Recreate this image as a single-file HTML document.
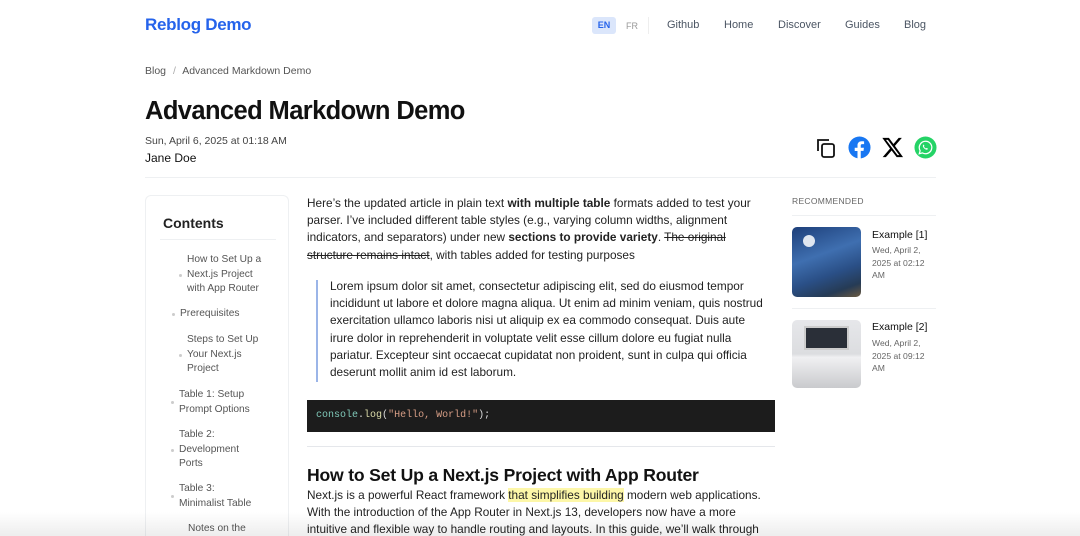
<!DOCTYPE html>
<html style="width:1080px;height:536px;overflow:hidden"><head><meta charset="utf-8"><style>
*{margin:0;padding:0;box-sizing:border-box}
body{width:1080px;height:536px;overflow:hidden;background:#fff;font-family:"Liberation Sans",sans-serif;color:#1f2328;position:relative}
.a{position:absolute}
.nav a{position:absolute;top:19px;font-size:11px;color:#4b5563}
.p{font-size:11.8px;line-height:17.2px;color:#222}
.toc div{position:absolute;font-size:10.2px;line-height:14.6px;color:#555}
.toc span{position:absolute;left:-8px;width:3px;height:3px;border-radius:50%;background:#ccc}
</style></head><body>
<div class="a" style="left:145px;top:15px;font-size:17px;font-weight:bold;color:#2563eb;letter-spacing:-0.3px">Reblog Demo</div>
<div class="nav">
<div class="a" style="left:592px;top:17px;width:24px;height:17px;background:#dbe6fb;border-radius:3px;font-size:9px;font-weight:bold;color:#2563eb;text-align:center;line-height:17px">EN</div>
<div class="a" style="left:626px;top:21px;font-size:9px;color:#999">FR</div>
<div class="a" style="left:648px;top:17px;width:1px;height:17px;background:#eee"></div>
<a style="left:667px">Github</a><a style="left:724px">Home</a><a style="left:778px">Discover</a><a style="left:845px">Guides</a><a style="left:904px">Blog</a>
</div>
<div class="a" style="left:145px;top:65px;font-size:10.5px;color:#555">Blog <span style="color:#aaa;margin:0 4px">/</span> Advanced Markdown Demo</div>
<div class="a" style="left:145px;top:97px;font-size:25.5px;font-weight:bold;letter-spacing:-0.6px;color:#111">Advanced Markdown Demo</div>
<div class="a" style="left:145px;top:135px;font-size:10.5px;color:#444">Sun, April 6, 2025 at 01:18 AM</div>
<div class="a" style="left:145px;top:151px;font-size:12px;color:#111">Jane Doe</div>
<svg class="a" style="left:815px;top:137px" width="24" height="22" viewBox="0 0 24 22" fill="none" stroke="#111" stroke-width="1.8"><path d="M3 14V3h11"/><rect x="7" y="7" width="12" height="13" rx="2"/></svg>
<svg class="a" style="left:848px;top:136px" width="23" height="23" viewBox="0 0 24 24"><circle cx="12" cy="12" r="11.5" fill="#1877f2"/><path d="M13.3 24v-8.5h2.9l.4-3.3h-3.3v-2.1c0-1 .3-1.6 1.7-1.6h1.8V5.6c-.3 0-1.4-.1-2.6-.1-2.6 0-4.3 1.6-4.3 4.4v2.4H7v3.3h2.9V24z" fill="#fff"/></svg>
<svg class="a" style="left:882px;top:137px" width="22" height="21" viewBox="0 0 24 23"><path d="M18.2 1h3.5l-7.6 8.7L23 22h-7l-5.5-7.2L4.2 22H.7l8.1-9.3L.3 1h7.2l5 6.6zM17 19.9h1.9L6.4 3.1H4.3z" fill="#000"/></svg>
<svg class="a" style="left:914px;top:136px" width="23" height="23" viewBox="0 0 24 24"><circle cx="12" cy="12" r="11.5" fill="#25d366"/><path d="M12 5.5a6.5 6.5 0 0 0-5.6 9.8l-.9 3.2 3.3-.9A6.5 6.5 0 1 0 12 5.5z" fill="none" stroke="#fff" stroke-width="1.3"/><path d="M9.6 9.2c.3-.4.7-.3.8 0l.4 1c.1.3-.3.6-.4.8.4.9 1.2 1.6 2.1 2 .2-.2.5-.6.8-.5l1 .5c.3.1.3.5 0 .8-.6.6-1.3.6-2 .3-1.4-.6-2.5-1.7-3-3.1-.2-.6 0-1.3.3-1.8z" fill="#fff"/></svg>
<div class="a" style="left:145px;top:177px;width:791px;height:1px;background:#eef0f2"></div>
<div class="a toc" style="left:145px;top:195px;width:144px;height:341px;border:1px solid #eef0f2;border-bottom:none;border-radius:6px 6px 0 0;overflow:hidden">
<div style="left:17px;top:20px;font-size:14px;font-weight:bold;color:#222">Contents</div>
<div style="left:14px;top:43px;width:116px;height:1px;background:#eef0f2"></div>
<div style="left:41px;top:57px;width:80px"><span style="top:21px"></span>How to Set Up a Next.js Project with App Router</div>
<div style="left:34px;top:111px"><span style="top:6px"></span>Prerequisites</div>
<div style="left:41px;top:137px;width:80px"><span style="top:21px"></span>Steps to Set Up Your Next.js Project</div>
<div style="left:33px;top:192px;width:88px"><span style="top:13px"></span>Table 1: Setup Prompt Options</div>
<div style="left:33px;top:232px;width:72px"><span style="top:21px"></span>Table 2: Development Ports</div>
<div style="left:33px;top:286px;width:82px"><span style="top:13px"></span>Table 3: Minimalist Table</div>
<div style="left:42px;top:326px;width:90px">Notes on the</div>
</div>
<div class="a p" style="left:307px;top:195px;width:462px">Here’s the updated article in plain text <b>with multiple table</b> formats added to test your parser. I’ve included different table styles (e.g., varying column widths, alignment indicators, and separators) under new <b>sections to provide variety</b>. <s>The original structure remains intact</s>, with tables added for testing purposes</div>
<div class="a" style="left:316px;top:280px;width:2px;height:102px;background:#9bb5e8"></div>
<div class="a p" style="left:330px;top:278px;width:440px">Lorem ipsum dolor sit amet, consectetur adipiscing elit, sed do eiusmod tempor incididunt ut labore et dolore magna aliqua. Ut enim ad minim veniam, quis nostrud exercitation ullamco laboris nisi ut aliquip ex ea commodo consequat. Duis aute irure dolor in reprehenderit in voluptate velit esse cillum dolore eu fugiat nulla pariatur. Excepteur sint occaecat cupidatat non proident, sunt in culpa qui officia deserunt mollit anim id est laborum.</div>
<div class="a" style="left:307px;top:400px;width:468px;height:32px;background:#1c1c1c;font-family:'Liberation Mono',monospace;font-size:10px;line-height:32px;padding-left:9px;color:#ddd"><span style="color:#7fc8b8">console</span>.<span style="color:#dcdcaa">log</span>(<span style="color:#d69d85">"Hello, World!"</span>);</div>
<div class="a" style="left:307px;top:446px;width:468px;height:1px;background:#e5e7eb"></div>
<div class="a" style="left:307px;top:465px;font-size:17.6px;font-weight:bold;color:#111;letter-spacing:-0.2px">How to Set Up a Next.js Project with App Router</div>
<div class="a p" style="left:307px;top:487px;width:468px;height:49px;overflow:hidden">Next.js is a powerful React framework <span style="background:#fdf7a8">that simplifies building</span> modern web applications. With the introduction of the App Router in Next.js 13, developers now have a more intuitive and flexible way to handle routing and layouts. In this guide, we’ll walk through the steps</div>
<div class="a" style="left:792px;top:196px;font-size:8.5px;color:#666;letter-spacing:0.3px">RECOMMENDED</div>
<div class="a" style="left:792px;top:215px;width:144px;height:1px;background:#eef0f2"></div>
<div class="a" style="left:792px;top:227px;width:69px;height:70px;border-radius:5px;background:linear-gradient(160deg,#1d3f7a 0%,#3f6fb0 40%,#2a4f86 65%,#263b55 85%,#6b5a40 100%)"></div>
<div class="a" style="left:803px;top:235px;width:12px;height:12px;border-radius:50%;background:#dfe6f0"></div>
<div class="a" style="left:872px;top:229px;font-size:10.5px;color:#111">Example [1]</div>
<div class="a" style="left:872px;top:244px;width:66px;font-size:8.6px;line-height:12.5px;color:#666">Wed, April 2, 2025 at 02:12 AM</div>
<div class="a" style="left:792px;top:308px;width:144px;height:1px;background:#eef0f2"></div>
<div class="a" style="left:792px;top:320px;width:69px;height:68px;border-radius:5px;background:linear-gradient(#e6e7ea 0%,#dcdde0 50%,#f0f0f2 55%,#c9cacd 100%)"></div>
<div class="a" style="left:804px;top:326px;width:45px;height:24px;background:#2a2f38;border:2px solid #ccc"></div>
<div class="a" style="left:872px;top:321px;font-size:10.5px;color:#111">Example [2]</div>
<div class="a" style="left:872px;top:337px;width:66px;font-size:8.6px;line-height:12.5px;color:#666">Wed, April 2, 2025 at 09:12 AM</div>
<div class="a" style="left:0;top:512px;width:1080px;height:24px;background:linear-gradient(rgba(0,0,0,0),rgba(0,0,0,0.07))"></div>
</body></html>
